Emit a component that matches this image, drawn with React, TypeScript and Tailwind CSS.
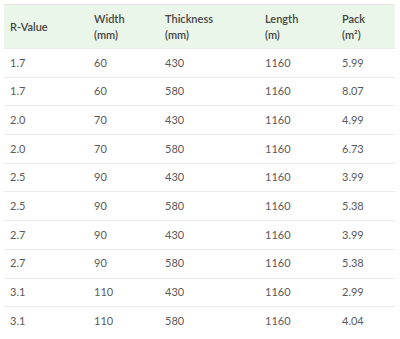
import React from "react";

const rows: string[][] = [
  ["1.7", "60", "430", "1160", "5.99"],
  ["1.7", "60", "580", "1160", "8.07"],
  ["2.0", "70", "430", "1160", "4.99"],
  ["2.0", "70", "580", "1160", "6.73"],
  ["2.5", "90", "430", "1160", "3.99"],
  ["2.5", "90", "580", "1160", "5.38"],
  ["2.7", "90", "430", "1160", "3.99"],
  ["2.7", "90", "580", "1160", "5.38"],
  ["3.1", "110", "430", "1160", "2.99"],
  ["3.1", "110", "580", "1160", "4.04"],
];

export default function App() {
  return (
    <div className="w-[400px] h-[339px] bg-white pl-[4px] pt-[4px] font-['Lato',sans-serif]">
      <table className="w-[391px] table-fixed border-collapse text-[11px]">
        <colgroup>
          <col className="w-[84px]" />
          <col className="w-[71px]" />
          <col className="w-[100px]" />
          <col className="w-[77px]" />
          <col className="w-[59px]" />
        </colgroup>
        <thead>
          <tr className="bg-[#e9f6e9] border-t border-[#e4e4e4] h-[44px] text-[#454545] font-semibold leading-[16px]">
            <th className="text-left font-semibold px-[6px] align-middle">R-Value</th>
            <th className="text-left font-semibold px-[6px] align-middle">Width<br />(mm)</th>
            <th className="text-left font-semibold px-[6px] align-middle">Thickness<br />(mm)</th>
            <th className="text-left font-semibold px-[6px] align-middle">Length<br />(m)</th>
            <th className="text-left font-semibold px-[6px] align-middle">Pack<br />(m²)</th>
          </tr>
        </thead>
        <tbody className="text-[#5a5a5a]">
          {rows.map((r, i) => (
            <tr key={i} className={`h-[28.7px] ${i < rows.length - 1 ? "border-b" : ""} border-t border-[#ebebeb]`}>
              {r.map((c, j) => (
                <td key={j} className="px-[6px] align-middle">{c}</td>
              ))}
            </tr>
          ))}
        </tbody>
      </table>
    </div>
  );
}
